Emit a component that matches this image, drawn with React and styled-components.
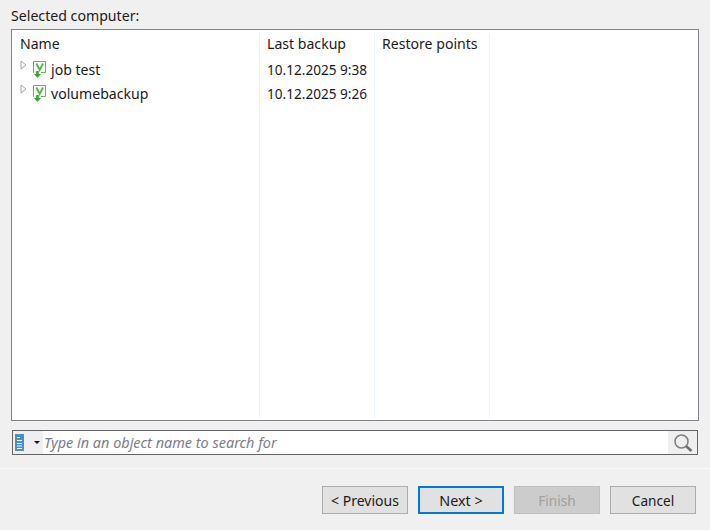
import styled, { createGlobalStyle } from 'styled-components';

const GlobalStyle = createGlobalStyle`
  html, body {
    margin: 0;
    height: 100%;
    background: #f0f0f0;
    font-family: "Noto Sans", "Open Sans", sans-serif;
    font-size: 14px;
    color: #1a1a1a;
  }
`

const Page = styled.div`
  width: 710px;
  height: 530px;
  display: flex;
  flex-direction: column;
  overflow: hidden;
`
const Label = styled.div`
  height: 29px;
  padding: 6px 0 0 11px;
  box-sizing: border-box;
  line-height: 19px;
  font-size: 14.15px;
`
const Panel = styled.div`
  margin: 0 11px;
  height: 392px;
  box-sizing: border-box;
  border: 1px solid #82828c;
  background: #fff;
  padding-top: 3px;
  display: flex;
  padding-bottom: 3px;
`
const Column = styled.div`
  width: ${p => p.$width}px;
  flex: ${p => (p.$grow ? 1 : 'none')};
  box-sizing: border-box;
  padding-left: 7px;
  border-right: ${p => (p.$grow ? 0 : '1px solid #e9f1f8')};
`
const Header = styled.div`
  height: 24px;
  line-height: 22px;
  font-size: 14.1px;
  margin-left: ${p => p.$indent || 0}px;
  white-space: nowrap;
`
const Cell = styled.div`
  height: 24px;
  line-height: 25px;
  font-size: 13.6px;
  white-space: nowrap;
`
const TreeRow = styled.div`
  height: 24px;
  display: flex;
  align-items: center;
  font-size: 14.1px;
  white-space: nowrap;
`
const Caret = styled.svg`
  width: 7px;
  height: 10px;
  margin: -9px 6px 0 1px;
  flex: none;
`
const JobIcon = styled.svg`
  width: 13px;
  height: 17px;
  margin: 0 5px 0 0;
  flex: none;
`
const SearchBar = styled.div`
  margin: 9px 12px 0;
  height: 25px;
  box-sizing: border-box;
  border: 1px solid #646464;
  background: #fff;
  display: flex;
  align-items: stretch;
`
const FilterButton = styled.div`
  width: 30px;
  background: #efefef;
  display: flex;
  align-items: center;
  padding-left: 2px;
  box-sizing: border-box;
  flex: none;
`
const Arrow = styled.span`
  width: 0;
  height: 0;
  margin-left: 10px;
  border-left: 3px solid transparent;
  border-right: 3px solid transparent;
  border-top: 3px solid #111;
`
const SearchInput = styled.div`
  flex: 1;
  padding-left: 1px;
  font-style: italic;
  font-size: 14.45px;
  line-height: 24px;
  color: #7d7d85;
  white-space: nowrap;
`
const SearchButton = styled.div`
  width: 29px;
  background: #efefef;
  display: flex;
  align-items: center;
  justify-content: center;
  flex: none;
`
const Footer = styled.div`
  margin-top: 13px;
  border-top: 1px solid #fafafa;
  padding: 17px 14px 0 0;
  display: flex;
  justify-content: flex-end;
  gap: 10px;
`
const Button = styled.div`
  width: 86px;
  height: 28px;
  box-sizing: border-box;
  border: ${p => (p.$primary ? '2px solid #0078d7' : p.$disabled ? '1px solid #bfbfbf' : '1px solid #adadad')};
  background: ${p => (p.$disabled ? '#cccccc' : '#e1e1e1')};
  color: ${p => (p.$disabled ? '#a0a0a0' : '#1a1a1a')};
  display: flex;
  align-items: center;
  justify-content: center;
  font-size: ${p => p.$size || 13.6}px;
`

function Expander() {
  return (
    <Caret viewBox="0 0 7 10">
      <path d="M1 1 L6 5 L1 9 Z" fill="#fff" stroke="#a6a6a6" />
    </Caret>
  )
}

function BackupIcon() {
  return (
    <JobIcon viewBox="0 0 13 17">
      <path d="M8 11.5 H12.5 V0.5 H0.5 V11.5 H1" fill="#f6fbf4" stroke="#62b65c" />
      <path d="M3.4 2.5 L6.7 9 L10 2.5" fill="none" stroke="#52b54b" strokeWidth="1.8" />
      <path d="M3.2 10 H5.8 V13 H8 L4.5 17 L1 13 H3.2 Z" fill="#3aa233" />
    </JobIcon>
  )
}

function SearchIcon() {
  return (
    <svg width="20" height="20" viewBox="0 0 20 20">
      <circle cx="8.5" cy="8.5" r="6.5" fill="none" stroke="#808080" strokeWidth="1.6" />
      <path d="M13.2 13.2 L18.5 18" stroke="#707070" strokeWidth="2.6" />
    </svg>
  )
}

function ListIcon() {
  return (
    <svg width="9" height="17" viewBox="0 0 9 17">
      <rect width="9" height="17" fill="#4a90c8" />
      <path d="M2 3.5 H5 M2 6.5 H7 M2 9.5 H7 M2 12 H7 M2 14.5 H7" stroke="#fff" strokeWidth="1" />
    </svg>
  )
}

const jobs = [
  { name: 'job test', last: '10.12.2025 9:38' },
  { name: 'volumebackup', last: '10.12.2025 9:26' },
]

export default function App() {
  return (
    <Page>
      <GlobalStyle />
      <Label>Selected computer:</Label>
      <Panel>
        <Column $width={248}>
          <Header $indent={1}>Name</Header>
          {jobs.map(job => (
            <TreeRow key={job.name}>
              <Expander />
              <BackupIcon />
              {job.name}
            </TreeRow>
          ))}
        </Column>
        <Column $width={115}>
          <Header>Last backup</Header>
          {jobs.map(job => <Cell key={job.name}>{job.last}</Cell>)}
        </Column>
        <Column $width={115}>
          <Header>Restore points</Header>
        </Column>
        <Column $grow />
      </Panel>
      <SearchBar>
        <FilterButton>
          <ListIcon />
          <Arrow />
        </FilterButton>
        <SearchInput>Type in an object name to search for</SearchInput>
        <SearchButton><SearchIcon /></SearchButton>
      </SearchBar>
      <Footer>
        <Button $size={14}>&lt; Previous</Button>
        <Button $primary $size={14.4}>Next &gt;</Button>
        <Button $disabled>Finish</Button>
        <Button>Cancel</Button>
      </Footer>
    </Page>
  )
}
